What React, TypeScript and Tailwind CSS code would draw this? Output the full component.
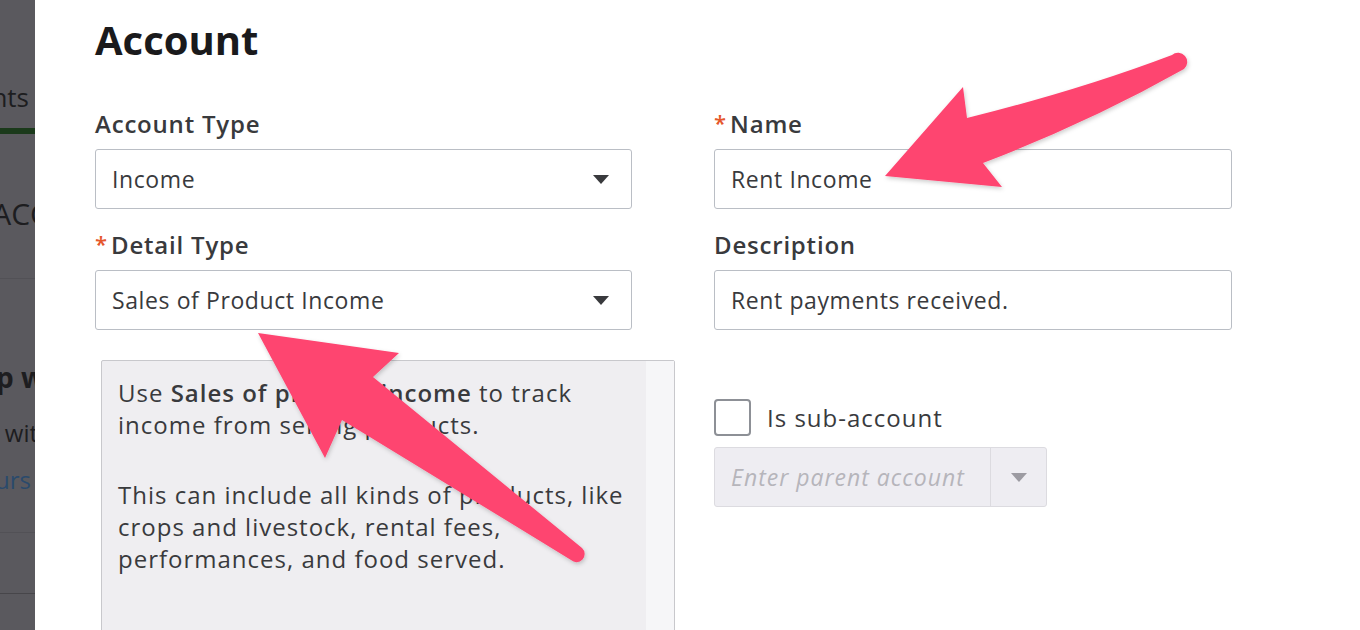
import React from 'react';

const font = { fontFamily: '"Open Sans", "Noto Sans", Arial, sans-serif' };

const Caret = ({ className }: { className: string }) => (
  <svg width="16" height="9" viewBox="0 0 16 9" className={className}>
    <path d="M0 0 L16 0 L8 9 Z" fill="currentColor" />
  </svg>
);

const Label = ({ text, required }: { text: string; required?: boolean }) => (
  <div className="flex items-center h-[30px] text-[24px] font-semibold tracking-[0.8px] text-[#393a3d] leading-[30px]">
    {required && <span className="text-[#e5572c] text-[22px] mr-[4px] -mt-[4px] tracking-normal">*</span>}
    {text}
  </div>
);

const SelectBox = ({ value }: { value: string }) => (
  <div className="h-[60px] w-[537px] border border-[#babec5] rounded-[3px] bg-white flex items-center justify-between pl-[16px] pr-[22px] text-[23px] tracking-[0.6px] text-[#393a3d]">
    <span>{value}</span>
    <Caret className="text-[#393a3d]" />
  </div>
);

const TextBox = ({ value }: { value: string }) => (
  <div className="h-[60px] w-[518px] border border-[#babec5] rounded-[3px] bg-white flex items-center pl-[16px] text-[23px] tracking-[0.6px] text-[#393a3d]">
    {value}
  </div>
);

// dimmed page behind the modal
const BackPage = () => (
  <div className="w-[35px] shrink-0 h-full bg-[#5a595e] overflow-hidden flex flex-col text-[#1d1d20]">
    <div className="h-[80px]" />
    <div className="flex justify-end pr-[6px] text-[26px] leading-[34px] whitespace-nowrap">nts</div>
    <div className="h-[14px]" />
    <div className="h-[6px] bg-[#1b3a1b]" />
    <div className="h-[62px]" />
    <div className="flex justify-end -mr-[14px] text-[30px] leading-[36px] whitespace-nowrap">ACC</div>
    <div className="h-[46px]" />
    <div className="border-t border-[#525156] h-[81px]" />
    <div className="flex justify-end -mr-[10px] text-[28px] font-bold leading-[36px] whitespace-nowrap">p w</div>
    <div className="h-[22px]" />
    <div className="flex justify-end -mr-[3px] text-[24px] leading-[32px] whitespace-nowrap">wit</div>
    <div className="h-[15px]" />
    <div className="flex justify-end pr-[4px] text-[24px] leading-[32px] whitespace-nowrap text-[#2a4a6c]">urs</div>
    <div className="h-[36px]" />
    <div className="border-t border-[#525156] h-[61px]" />
    <div className="border-t border-[#47464a]" />
  </div>
);

const Arrows = () => (
  <svg className="absolute inset-0 pointer-events-none" width="1360" height="630" viewBox="0 0 1360 630">
    <defs>
      <filter id="sh" x="-10%" y="-10%" width="120%" height="120%">
        <feDropShadow dx="1" dy="2" stdDeviation="2" floodColor="#000" floodOpacity="0.2" />
      </filter>
    </defs>
    <g fill="#fe4470" filter="url(#sh)">
      <path d="M1172 55 Q1080 90 967 118 L963 87 L885 176 L1002 187 L983 163 Q1090 122 1184 69 A7 7 0 0 0 1172 55 Z" />
      <path d="M258 333 L399 353 L373 377 L582 548 A7 7 0 0 1 571 560 Q460 492 342 420 L325 458 Z" />
    </g>
  </svg>
);

export default function App() {
  return (
    <div className="relative w-[1360px] h-[630px] overflow-hidden flex bg-white" style={font}>
      <BackPage />
      <div className="flex-1 pl-[60px] pt-[14px]">
        <h1 className="text-[40px] font-bold leading-[52px] text-[#1a1a1c]">Account</h1>
        <div className="flex gap-[82px] mt-[43px]">
          <div className="w-[537px]">
            <Label text="Account Type" />
            <div className="mt-[10px]"><SelectBox value="Income" /></div>
            <div className="mt-[21px]"><Label text="Detail Type" required /></div>
            <div className="mt-[10px]"><SelectBox value="Sales of Product Income" /></div>
            <div className="mt-[30px] ml-[6px] w-[574px] h-[300px] border border-[#c8c8cc] rounded-[2px] bg-[#efeef1] flex">
              <div className="flex-1 pl-[16px] pt-[16px] text-[24px] tracking-[1px] leading-[32px] text-[#393a3d] whitespace-nowrap">
                <p>
                  Use <b className="font-semibold">Sales of product income</b> to track
                  <br />
                  income from selling products.
                </p>
                <p className="mt-[38px]">
                  This can include all kinds of products, like
                  <br />
                  crops and livestock, rental fees,
                  <br />
                  performances, and food served.
                </p>
              </div>
              <div className="w-[28px] bg-[#f6f6f8]" />
            </div>
          </div>
          <div className="w-[518px]">
            <Label text="Name" required />
            <div className="mt-[10px]"><TextBox value="Rent Income" /></div>
            <div className="mt-[21px]"><Label text="Description" /></div>
            <div className="mt-[10px]"><TextBox value="Rent payments received." /></div>
            <div className="mt-[69px] flex items-center gap-[16px]">
              <div className="w-[37px] h-[37px] border-2 border-[#8d9096] rounded-[4px] bg-white" />
              <span className="text-[24px] tracking-[1px] text-[#393a3d]">Is sub-account</span>
            </div>
            <div className="mt-[11px] w-[333px] h-[60px] border border-[#dcdbe0] rounded-[3px] bg-[#eeedf2] flex">
              <div className="flex-1 flex items-center pl-[16px] text-[23px] tracking-[1px] italic text-[#b6b5bb] whitespace-nowrap">Enter parent account</div>
              <div className="w-[56px] border-l border-[#dcdbe0] flex items-center justify-center">
                <Caret className="text-[#9c9ba2]" />
              </div>
            </div>
          </div>
        </div>
      </div>
      <Arrows />
    </div>
  );
}
